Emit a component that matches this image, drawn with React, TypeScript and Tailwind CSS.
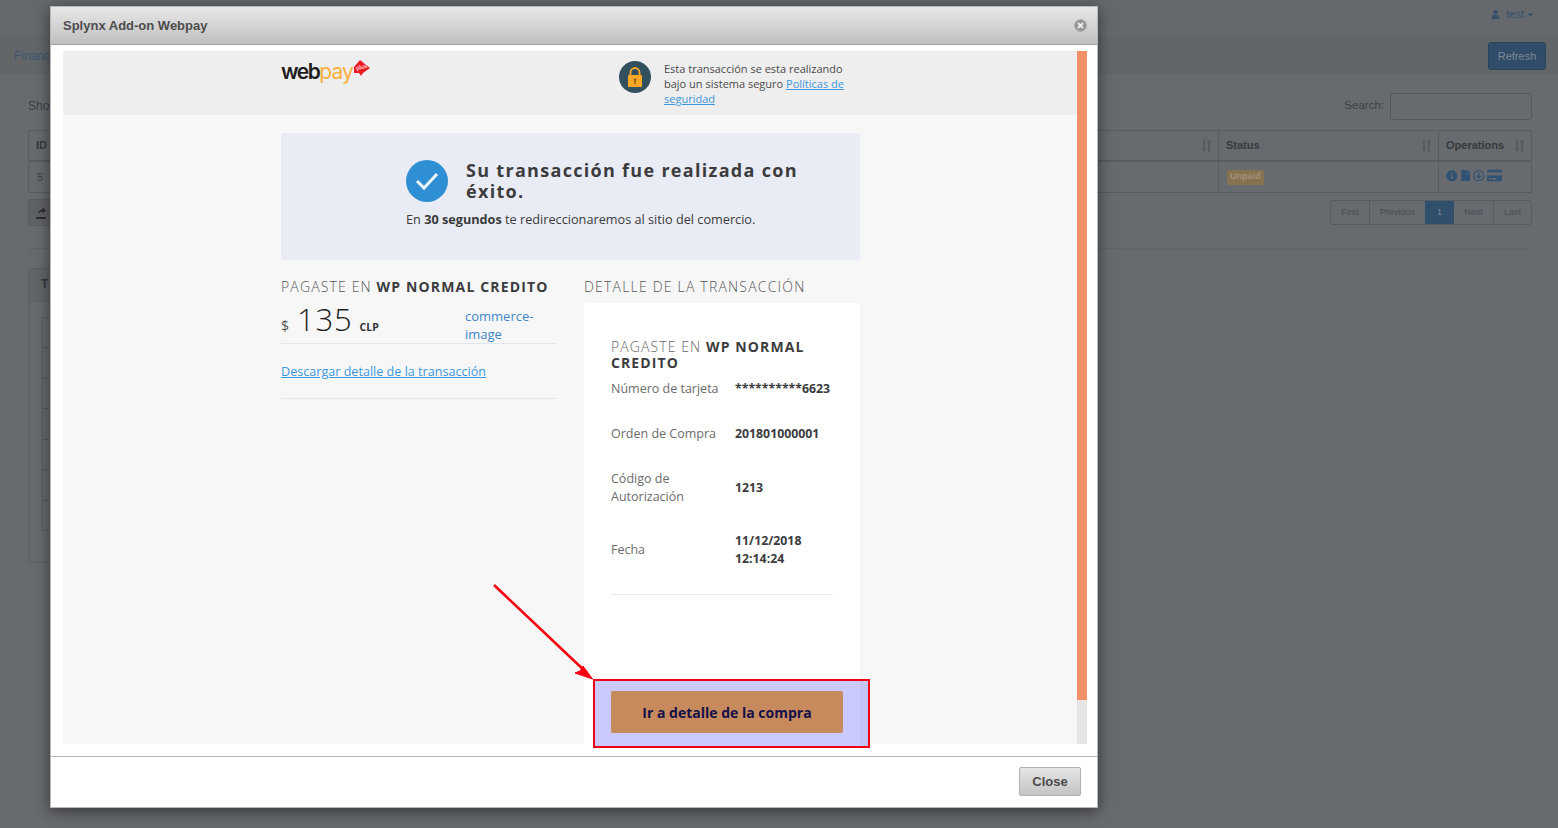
import { FaCaretDown, FaCreditCard, FaFile, FaInfoCircle, FaRegArrowAltCircleDown, FaUser } from "react-icons/fa"

const rows = [
  { label: "Número de tarjeta", value: "**********6623", box: "h-[45px] pt-[8px]" },
  { label: "Orden de Compra", value: "201801000001", box: "h-[39px] pt-[8px]" },
  { label: "Código de Autorización", value: "1213", box: "h-[63px] items-center" },
  { label: "Fecha", value: "11/12/2018 12:14:24", box: "h-[62px] items-center" },
]

const Sort = () => (
  <svg width="11" height="13" viewBox="0 0 11 13" fill="#575a5e">
    <path d="M2 0h2v9h1.5L3 13 .5 9H2zM7 13h2V4h1.5L8 0 5.5 4H7z" />
  </svg>
)

// la página de atrás, oscurecida por el modal
const BackPage = () => (
  <div className="w-[1558px] h-[828px] bg-[#676a6e] text-[#37393c] text-[12px]">
    <div className="h-[38px] flex justify-end items-center pr-[23px] pb-[9px] border-b border-[#606367] bg-[#65686c] text-[#35506b] text-[11px] gap-[6px]">
      <FaUser className="text-[9px]" />
      <span className="flex items-center gap-[2px]">test <FaCaretDown className="text-[9px]" /></span>
    </div>
    <div className="h-[36px] flex justify-between items-center pl-[14px] pr-[12px] bg-[#636669] border-b border-[#606367]">
      <span className="text-[#3d5770]">Finance</span>
      <span className="w-[58px] h-[28px] flex items-center justify-center pt-[1px] rounded-[3px] border border-[#28425c] bg-[#304c68] text-[#7a8794] text-[11px]">Refresh</span>
    </div>
    <div className="pl-[28px] pr-[26px] pt-[19px]">
      <div className="flex justify-between items-center h-[28px] pb-[2px]">
        <span className="text-[#3f4144]">Show</span>
        <div className="flex items-center gap-[6px] text-[#3f4144] text-[11.5px]">
          Search:
          <span className="w-[142px] h-[27px] border border-[#54575b] rounded-[3px]" />
        </div>
      </div>
      <div className="mt-[9px] border border-[#585b5f] rounded-[1px]">
        <div className="h-[31px] flex items-center border-b-2 border-[#585b5f] font-bold text-[11px]">
          <span className="flex-1 pl-[7px]">ID</span>
          <span className="w-[341px] h-full flex items-center justify-end pr-[6px]"><Sort /></span>
          <span className="w-[220px] h-full flex items-center justify-between pl-[7px] pr-[6px] border-l border-[#585b5f]">Status<Sort /></span>
          <span className="w-[93px] h-full flex items-center justify-between pl-[7px] pr-[6px] border-l border-[#585b5f]">Operations<Sort /></span>
        </div>
        <div className="h-[30px] flex items-center text-[#424447] text-[11px]">
          <span className="flex-1 pl-[8px]">5</span>
          <span className="w-[220px] h-full flex items-center px-[8px] border-l border-[#585b5f]">
            <span className="h-[15px] px-[3px] flex items-center rounded-[2px] bg-[#877250] text-[#a39178] text-[9px] font-bold">Unpaid</span>
          </span>
          <span className="w-[93px] h-full flex items-center gap-[2px] px-[7px] pb-[3px] border-l border-[#585b5f] text-[#2f5172] text-[11.5px]">
            <FaInfoCircle /><FaFile /><FaRegArrowAltCircleDown /><FaCreditCard className="text-[15px]" />
          </span>
        </div>
      </div>
      <div className="flex justify-between mt-[6px]">
        <span className="w-[40px] h-[27px] flex items-center pl-[6px] pb-[1px] rounded-[3px] border border-[#585b5f] bg-[#5f6266]">
          <svg width="12" height="13" viewBox="0 0 12 13" fill="#2a2c2f"><path d="M1 11h10v2H1zM3 8.5c0-3 1.6-4.8 4.5-5V1.500l3.500 3-3.500 3V5.500C5.500 5.600 4 6.600 3 8.500z" /></svg>
        </span>
        <div className="flex h-[25px] mt-[1px] border border-[#585b5f] rounded-[3px] text-[#4a4d50] text-[9px]">
          <span className="w-[38px] flex items-center justify-center">First</span>
          <span className="w-[56px] flex items-center justify-center border-l border-[#585b5f]">Previous</span>
          <span className="w-[29px] flex items-center justify-center bg-[#2f4f6d] text-[#7a8794]">1</span>
          <span className="w-[39px] flex items-center justify-center">Next</span>
          <span className="w-[38px] flex items-center justify-center border-l border-[#585b5f]">Last</span>
        </div>
      </div>
      <div className="mt-[22px] border-t border-[#606367]" />
      <div className="mt-[19px] w-[60px] h-[295px] border border-[#5c5f63] rounded-[3px]">
        <div className="h-[33px] pl-[12px] pb-[2px] flex items-center bg-[#626569] font-bold text-[12px] border-b border-[#5c5f63]">T</div>
        <div className="ml-[13px] mt-[15px] h-[214px] border border-[#585b5f] flex flex-col">
          {[1, 2, 3, 4, 5, 6, 7].map((n) => (
            <div key={n} className="flex-1 border-b border-[#585b5f] last:border-b-0" />
          ))}
        </div>
      </div>
    </div>
  </div>
)

const Logo = () => (
  <div className="flex items-start">
    <span className="font-['Inter',sans-serif] text-[21px] leading-[24px] font-semibold tracking-[-1.5px] text-[#1e1c1c]">web<span className="font-normal tracking-[-1px] text-[#fbb03b]">pay</span></span>
    <span className="relative w-[16px] h-[16px] ml-[1px] flex items-center justify-center">
      <svg className="absolute inset-0" width="16" height="16" viewBox="0 0 16 16"><path d="M6 0l10 8-7 5-2 3-2-3H0V7z" fill="#ed1c24" /></svg>
      <span className="relative -mt-[3px] text-white text-[6px] leading-none font-['Liberation_Sans',sans-serif] -rotate-[15deg]">plus</span>
    </span>
  </div>
)

const WebpayFrame = () => (
  <div className="flex h-[693px] ml-[12px] mt-[6px] mr-[10px]">
    <div className="flex-1 bg-[#f7f7f7] font-['Open_Sans',sans-serif] text-[#404040]">
      <div className="h-[64px] bg-[#eeeeee] pl-[218px] flex">
        <div className="w-[338px] pt-[9px]"><Logo /></div>
        <div className="flex pt-[10px]">
          <span className="w-[32px] h-[32px] rounded-full bg-[#33505f] flex items-center justify-center">
            <svg width="16" height="20" viewBox="0 0 16 20">
              <path d="M3.5 9V5.5a4.5 4.5 0 0 1 9 0V9" fill="none" stroke="#f9a825" strokeWidth="1.8" />
              <rect x="1" y="8" width="14" height="12" rx="1" fill="#f9a825" />
              <path d="M8 11.5a1.3 1.3 0 0 1 .7 2.4V17H7.3v-3.1A1.3 1.3 0 0 1 8 11.5z" fill="#8a5a10" />
            </svg>
          </span>
          <p className="w-[190px] ml-[13px] text-[11px] leading-[15px] text-[#4a4a4a]">
            Esta transacción se esta realizando bajo un sistema seguro <a className="text-[#3b97dc] underline">Políticas de seguridad</a>
          </p>
        </div>
      </div>

      <div className="pl-[218px] w-[797px] relative">
        <div className="mt-[18px] h-[127px] rounded-[2px] bg-[#e9ecf4] pl-[125px] pt-[27px]">
          <div className="flex gap-[18px]">
            <span className="w-[42px] h-[42px] shrink-0 rounded-full bg-[#2f8fd4] flex items-center justify-center">
              <svg width="26" height="20" viewBox="0 0 26 20"><path d="M3 10l7 7L23 3" fill="none" stroke="#eef5fb" strokeWidth="3" /></svg>
            </span>
            <h2 className="w-[350px] text-[18px] leading-[21px] font-bold tracking-[1.3px] text-[#3c3c3e]">Su transacción fue realizada con éxito.</h2>
          </div>
          <p className="mt-[8px] text-[12.7px] leading-[18px] text-[#3a3a3a]">En <b>30 segundos</b> te redireccionaremos al sitio del comercio.</p>
        </div>

        <div className="flex gap-[27px] mt-[17px]">
          <div className="w-[276px]">
            <h3 className="h-[20px] text-[14px] leading-[20px] font-light tracking-[1.15px] text-[#555] whitespace-nowrap">PAGASTE EN <b className="font-bold text-[#3c3c3e] tracking-[1.15px]">WP NORMAL CREDITO</b></h3>
            <div className="flex h-[47px] border-b border-[#e3e6ec]">
              <div className="w-[184px] flex items-baseline pt-[5px] h-[44px]">
                <span className="text-[14px] text-[#555]">$</span>
                <span className="ml-[8px] text-[31px] leading-[34px] font-light tracking-[0.8px] text-[#222]">135</span>
                <span className="ml-[7px] text-[10.5px] font-bold text-[#333]">CLP</span>
              </div>
              <a className="w-[80px] pt-[10px] text-[13px] leading-[18px] text-[#3f86c9]">commerce-image</a>
            </div>
            <div className="h-[55px] pt-[2px] flex items-center border-b border-[#e3e6ec]">
              <a className="text-[12.6px] text-[#3b97dc] underline">Descargar detalle de la transacción</a>
            </div>
          </div>

          <div className="w-[276px]">
            <h3 className="h-[26px] text-[14px] leading-[20px] font-light tracking-[1.2px] text-[#555]">DETALLE DE LA TRANSACCIÓN</h3>
            <div className="h-[441px] rounded-t-[2px] bg-white px-[27px] pt-[36px]">
              <h4 className="w-[222px] text-[14px] leading-[16px] font-light tracking-[1.1px] text-[#666]">PAGASTE EN <b className="font-bold text-[#3c3c3e] tracking-[1.1px]">WP NORMAL CREDITO</b></h4>
              <div className="w-[222px] mt-[1px] border-b border-[#ececec] pb-[13px]">
                {rows.map((row) => (
                  <div key={row.label} className={`flex ${row.box}`}>
                    <span className="w-[124px] shrink-0 text-[12.5px] leading-[18px] text-[#6b6b6b]">{row.label}</span>
                    <span className="w-[98px] text-[12.3px] leading-[18px] font-bold text-[#3c3c3e]">{row.value}</span>
                  </div>
                ))}
              </div>
            </div>
          </div>
        </div>

        {/* recuadro rojo del tutorial */}
        <div className="absolute left-[530px] top-[546px] w-[277px] h-[69px] border-2 border-[#f00014] bg-[#cbcaff] pl-[16px] pt-[10px]">
          <span className="absolute right-0 inset-y-0 w-[8px] bg-[#c4c3f4]" />
          <button className="relative w-[232px] h-[42px] rounded-[2px] bg-[#c68a5c] text-[14px] font-bold text-[#14104a]">Ir a detalle de la compra</button>
        </div>
      </div>
    </div>
    <div className="w-[10px] bg-[#e5e5e5]">
      <div className="h-[649px] bg-[#f29068]" />
    </div>
  </div>
)

export default function App() {
  return (
    <div className="relative w-[1558px] h-[828px] overflow-hidden font-['Liberation_Sans',sans-serif]">
      <BackPage />

      <div className="absolute left-[50px] top-[6px] w-[1048px] h-[802px] flex flex-col bg-white border border-[#b8b8b8] shadow-[0_3px_14px_rgba(0,0,0,0.5)]">
        <div className="h-[38px] shrink-0 flex items-center justify-between pl-[12px] pr-[10px] bg-gradient-to-b from-[#e8e8e8] to-[#c0c0c0] border-b border-[#9f9f9f]">
          <span className="text-[13px] font-bold text-[#4c4c4c]">Splynx Add-on Webpay</span>
          <span className="w-[13px] h-[13px] rounded-full bg-[#959595] border border-[#b0b0b0] flex items-center justify-center">
            <svg width="7" height="7" viewBox="0 0 7 7"><path d="M1 1l5 5M6 1L1 6" stroke="#eee" strokeWidth="1.8" /></svg>
          </span>
        </div>
        <div className="h-[711px] shrink-0">
          <WebpayFrame />
        </div>
        <div className="flex-1 flex justify-end items-start pt-[10px] pr-[16px] border-t border-[#b5b5b5]">
          <button className="w-[62px] h-[29px] rounded-[2px] border border-[#b0b0b0] bg-gradient-to-b from-[#e6e6e6] to-[#c4c4c4] text-[13px] font-bold text-[#4a4a4a]">Close</button>
        </div>
      </div>

      <svg className="absolute left-[490px] top-[580px]" width="110" height="105" viewBox="0 0 110 105">
        <path d="M4 5L97 93" stroke="#f80010" strokeWidth="2.6" />
        <path d="M102.500 99L85 93l5-2 3-5z" fill="#f80010" stroke="#f80010" />
      </svg>
    </div>
  )
}
